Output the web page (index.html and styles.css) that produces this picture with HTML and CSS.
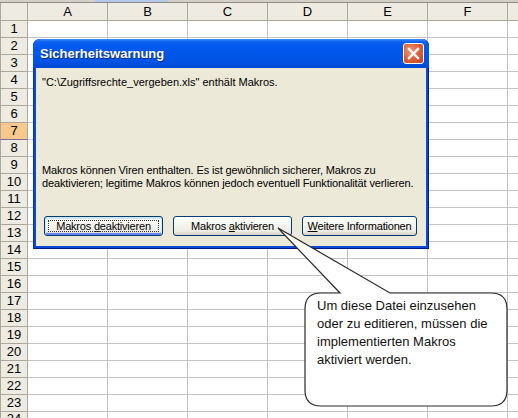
FILE: index.html
```html
<!DOCTYPE html>
<html lang="de">
<head>
    <meta charset="UTF-8"/>
    <title>Sicherheitswarnung</title>
    <link rel="stylesheet" href="styles.css">
</head>
<body>
<div class="topbar"></div>

<div class="sheet">
    <div class="corner"></div>
    <div class="col-heads">
        <div class="col-head">A</div>
        <div class="col-head">B</div>
        <div class="col-head">C</div>
        <div class="col-head">D</div>
        <div class="col-head">E</div>
        <div class="col-head">F</div>
        <div class="col-head"></div>
    </div>
    <div class="row-heads">
        <div class="row-head">1</div>
        <div class="row-head">2</div>
        <div class="row-head">3</div>
        <div class="row-head">4</div>
        <div class="row-head">5</div>
        <div class="row-head">6</div>
        <div class="row-head row-head-active">7</div>
        <div class="row-head">8</div>
        <div class="row-head">9</div>
        <div class="row-head">10</div>
        <div class="row-head">11</div>
        <div class="row-head">12</div>
        <div class="row-head">13</div>
        <div class="row-head">14</div>
        <div class="row-head">15</div>
        <div class="row-head">16</div>
        <div class="row-head">17</div>
        <div class="row-head">18</div>
        <div class="row-head">19</div>
        <div class="row-head">20</div>
        <div class="row-head">21</div>
        <div class="row-head">22</div>
        <div class="row-head">23</div>
        <div class="row-head row-head-last">24</div>
    </div>
    <div class="cells"></div>
</div>

<!-- Dialog -->
<div class="dialog">
    <div class="dialog-title">
        <span class="dialog-caption">Sicherheitswarnung</span>
        <span class="dialog-close">
            <svg width="13" height="13" viewBox="0 0 13 13">
                <path d="M2 2 L11 11 M11 2 L2 11" stroke="#fff" stroke-width="2.4" stroke-linecap="square"/>
            </svg>
        </span>
    </div>
    <div class="dialog-body">
        <p class="dialog-file">"C:\Zugriffsrechte_vergeben.xls" enthält Makros.</p>
        <p class="dialog-note">Makros können Viren enthalten. Es ist gewöhnlich sicherer, Makros zu<br>deaktivieren; legitime Makros können jedoch eventuell Funktionalität verlieren.</p>
        <div class="dialog-buttons">
            <button class="btn btn-wide btn-focus">Makros <u>d</u>eaktivieren</button>
            <button class="btn btn-wide">Makros <u>a</u>ktivieren</button>
            <button class="btn btn-info"><u>W</u>eitere Informationen</button>
        </div>
    </div>
</div>

<!-- Legende -->
<svg class="callout-shape" width="248" height="198" viewBox="0 0 248 198">
    <path d="M51 73 L70 73 L8 8 L120 73 L221 73 Q237 73 237 89 L237 170 Q237 186 221 186 L51 186 Q35 186 35 170 L35 89 Q35 73 51 73 Z"
          fill="#fff" stroke="#2a2a2a" stroke-width="1.2"/>
</svg>
<div class="callout-text">Um diese Datei einzusehen<br>oder zu editieren, müssen die<br>implementierten Makros<br>aktiviert werden.</div>
</body>
</html>
```

FILE: styles.css
```css
* {
    margin: 0;
    padding: 0;
    box-sizing: border-box;
}

body {
    width: 518px;
    height: 418px;
    overflow: hidden;
    position: relative;
    background-color: #fff;
    font-family: "Liberation Sans", Arial, sans-serif;
}

.topbar {
    height: 3px;
    background: linear-gradient(to right, #d4d0c8 95px, #b3caee 95px, #b3caee 168px, #d4d0c8 168px);
    border-bottom: 1px solid #8e8c84;
}

/* Tabelle */
.sheet {
    display: grid;
    grid-template-columns: 28px 1fr;
    grid-template-rows: 18px 1fr;
    height: 415px;
    overflow: hidden;
}

.corner {
    background-color: #eeebe2;
    border-left: 1px solid #aca899;
    border-right: 1px solid #aca899;
    border-bottom: 1px solid #aca899;
}

.col-heads {
    display: flex;
    overflow: hidden;
}

.col-head {
    flex: 0 0 80px;
    height: 18px;
    background-color: #eeebe2;
    border-right: 1px solid #aca899;
    border-bottom: 1px solid #aca899;
    text-align: center;
    font-size: 13px;
    line-height: 17px;
    color: #000;
}

.row-heads {
    display: flex;
    flex-direction: column;
    overflow: hidden;
}

.row-head {
    flex: 0 0 17px;
    background-color: #eeebe2;
    border-left: 1px solid #aca899;
    border-right: 1px solid #aca899;
    border-bottom: 1px solid #aca899;
    text-align: center;
    font-size: 13px;
    line-height: 16px;
    color: #000;
}

.row-head-last {
    line-height: 14px;
    flex-basis: 14px;
}

.row-head-active {
    background-color: #f8c88c;
    border-bottom-color: #7d6ba0;
}

.cells {
    background-image: repeating-linear-gradient(to right, transparent 0, transparent 79px, #c4c4c4 79px, #c4c4c4 80px),
    repeating-linear-gradient(to bottom, transparent 0, transparent 16px, #c4c4c4 16px, #c4c4c4 17px);
}

/* Dialog */
.dialog {
    position: absolute;
    left: 33px;
    top: 39px;
    width: 396px;
    height: 210px;
    display: flex;
    flex-direction: column;
    background-color: #0a48d6;
    border-radius: 7px 7px 0 0;
    box-shadow: inset 1px 0 0 #0831a8, inset -1px 0 0 #001c8c, inset 0 -1px 0 #001c8c;
}

.dialog-title {
    height: 29px;
    display: flex;
    align-items: center;
    justify-content: space-between;
    padding: 0 5px 0 7px;
    border-radius: 7px 7px 0 0;
    background: linear-gradient(#3d8dfb 0, #0a5ff0 3px, #0058ec 10px, #0054e3 22px, #0148d4 29px);
}

.dialog-caption {
    color: #fff;
    font-weight: bold;
    font-size: 13px;
    text-shadow: 1px 1px 0 #0a2a8a;
}

.dialog-close {
    width: 21px;
    height: 21px;
    display: flex;
    align-items: center;
    justify-content: center;
    border: 1px solid #fff;
    border-radius: 3px;
    background: radial-gradient(circle at 35% 35%, #ec9a78 0, #dd6440 45%, #c2401c 100%);
}

.dialog-body {
    flex: 1;
    margin: 0 3px 3px 3px;
    padding: 8px 2px 10px 6px;
    display: flex;
    flex-direction: column;
    background-color: #ece9d8;
    font-size: 11px;
    line-height: 13px;
    color: #000;
    white-space: nowrap;
}

.dialog-note {
    margin-top: auto;
    letter-spacing: -0.12px;
}

.dialog-buttons {
    display: flex;
    gap: 10px;
    margin-top: 26px;
    padding-left: 2px;
}

.btn {
    position: relative;
    height: 20px;
    border: 1px solid #003c74;
    border-radius: 3px;
    background: linear-gradient(#fff 0, #f6f5f0 40%, #ecebe4 80%, #d6d0c5 100%);
    font-family: "Liberation Sans", Arial, sans-serif;
    font-size: 11px;
    letter-spacing: -0.2px;
    color: #000;
}

.btn-wide {
    width: 119px;
}

.btn-info {
    width: 115px;
}

.btn-focus {
    box-shadow: inset 0 1px 0 1px #cee7ff, inset 0 -1px 0 1px #6982ee;
}

.btn-focus::after {
    content: "";
    position: absolute;
    left: 3px;
    top: 3px;
    right: 3px;
    bottom: 3px;
    border: 1px dotted #333;
}

/* Legende */
.callout-shape {
    position: absolute;
    left: 270px;
    top: 220px;
}

.callout-text {
    position: absolute;
    left: 317px;
    top: 297px;
    font-size: 13px;
    line-height: 18px;
    color: #111;
}
```
